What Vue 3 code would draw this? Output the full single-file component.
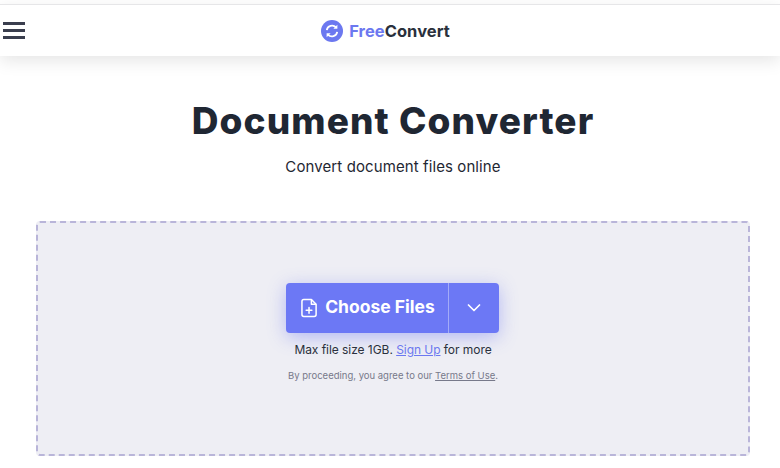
<script setup>
const title = "Document Converter";
</script>

<template>
	<div class="page">
		<header class="topbar">
			<button class="menu" aria-label="menu">
				<span></span>
				<span></span>
				<span></span>
			</button>
			<div class="logo">
				<svg width="22" height="22" viewBox="0 0 22 22">
					<circle cx="11" cy="11" r="11" fill="#6c78f0" />
					<path d="M5.8 10.2a5.3 5.3 0 0 1 9.2-2.8" fill="none" stroke="#fff" stroke-width="1.8" />
					<path d="M16.2 11.8a5.3 5.3 0 0 1-9.2 2.8" fill="none" stroke="#fff" stroke-width="1.8" />
					<path d="M16.4 4.8v4h-4z" fill="#fff" />
					<path d="M5.6 17.2v-4h4z" fill="#fff" />
				</svg>
				<span class="logo-text"><span class="free">Free</span>Convert</span>
			</div>
		</header>
		<main class="content">
			<h1>{{ title }}</h1>
			<p class="sub">Convert document files online</p>
			<section class="drop">
				<div class="choose">
					<div class="choose-main">
						<svg width="17" height="20" viewBox="0 0 18 20" fill="none" stroke="#fff" stroke-width="1.6">
							<path d="M3 1h8l5 5v11a2 2 0 0 1-2 2H3a2 2 0 0 1-2-2V3a2 2 0 0 1 2-2z" stroke-linejoin="round" />
							<path d="M11 1v5h5" stroke-linejoin="round" />
							<path d="M8.5 9.5v6M5.5 12.5h6" stroke-linecap="round" />
						</svg>
						<span class="choose-label">Choose Files</span>
					</div>
					<div class="choose-more">
						<svg width="14" height="8" viewBox="0 0 14 8" fill="none" stroke="#fff" stroke-width="1.7">
							<path d="M1.5 1l5.5 5.5L12.5 1" stroke-linecap="round" stroke-linejoin="round" />
						</svg>
					</div>
				</div>
				<p class="limit">Max file size 1GB. <a href="#">Sign Up</a> for more</p>
				<p class="terms">By proceeding, you agree to our <a href="#">Terms of Use</a>.</p>
			</section>
		</main>
	</div>
</template>

<style scoped>
.page {
	width: 780px;
	height: 468px;
	overflow: hidden;
	background: #fff;
	font-family: "Inter", "Noto Sans", sans-serif;
	color: #1f2733;
}

.topbar {
	position: relative;
	height: 51px;
	margin-top: 4px;
	border-top: 1px solid #e6e6e8;
	display: flex;
	align-items: center;
	justify-content: center;
	box-shadow: 0 5px 16px rgba(0, 0, 0, 0.1);
}

.menu {
	position: absolute;
	left: 3px;
	top: 17px;
	width: 22px;
	padding: 0;
	border: none;
	background: none;
	display: flex;
	flex-direction: column;
	gap: 4.5px;
}

.menu span {
	height: 2.5px;
	background: #3a3e4e;
}

.logo {
	display: flex;
	align-items: center;
	gap: 6px;
	margin-left: -9px;
}

.logo-text {
	font-size: 16.5px;
	font-weight: 700;
	letter-spacing: 0.05px;
	color: #2a303c;
}

.free {
	color: #6c78f0;
}

.content {
	padding-left: 6px;
	display: flex;
	flex-direction: column;
	align-items: center;
}

h1 {
	margin: 40px 0 0;
	font-size: 37px;
	line-height: 50px;
	font-weight: 800;
	letter-spacing: 1.1px;
	color: #1f2733;
}

.sub {
	margin: 10px 0 0;
	font-size: 15px;
	line-height: 22px;
	letter-spacing: 0.1px;
}

.drop {
	box-sizing: border-box;
	width: 714px;
	height: 235px;
	margin-top: 43px;
	padding-top: 60px;
	padding-right: 2px;
	border: 2px dashed #b9b5d9;
	border-radius: 4px;
	background: #eeeef4;
	display: flex;
	flex-direction: column;
	align-items: center;
}

.choose {
	width: 213px;
	height: 50px;
	display: flex;
	border-radius: 4px;
	background: #6c78f5;
	color: #fff;
	box-shadow: 0 4px 18px rgba(108, 120, 245, 0.45);
}

.choose-main {
	box-sizing: border-box;
	width: 163px;
	padding-left: 3px;
	display: flex;
	align-items: center;
	justify-content: center;
	gap: 7px;
	font-size: 17.5px;
	font-weight: 700;
	border-right: 1px solid #a3abf8;
}

.choose-label {
	margin-bottom: 3px;
}

.choose-more {
	flex: 1;
	display: flex;
	align-items: center;
	justify-content: center;
}

.limit {
	margin: 8px 0 0 2px;
	font-size: 12px;
	line-height: 18px;
	letter-spacing: -0.05px;
	color: #2a303c;
}

.limit a {
	color: #6c78f0;
}

.terms {
	margin: 10px 0 0 2px;
	font-size: 9.5px;
	line-height: 14px;
	color: #77798a;
}

.terms a {
	color: #77798a;
}
</style>
